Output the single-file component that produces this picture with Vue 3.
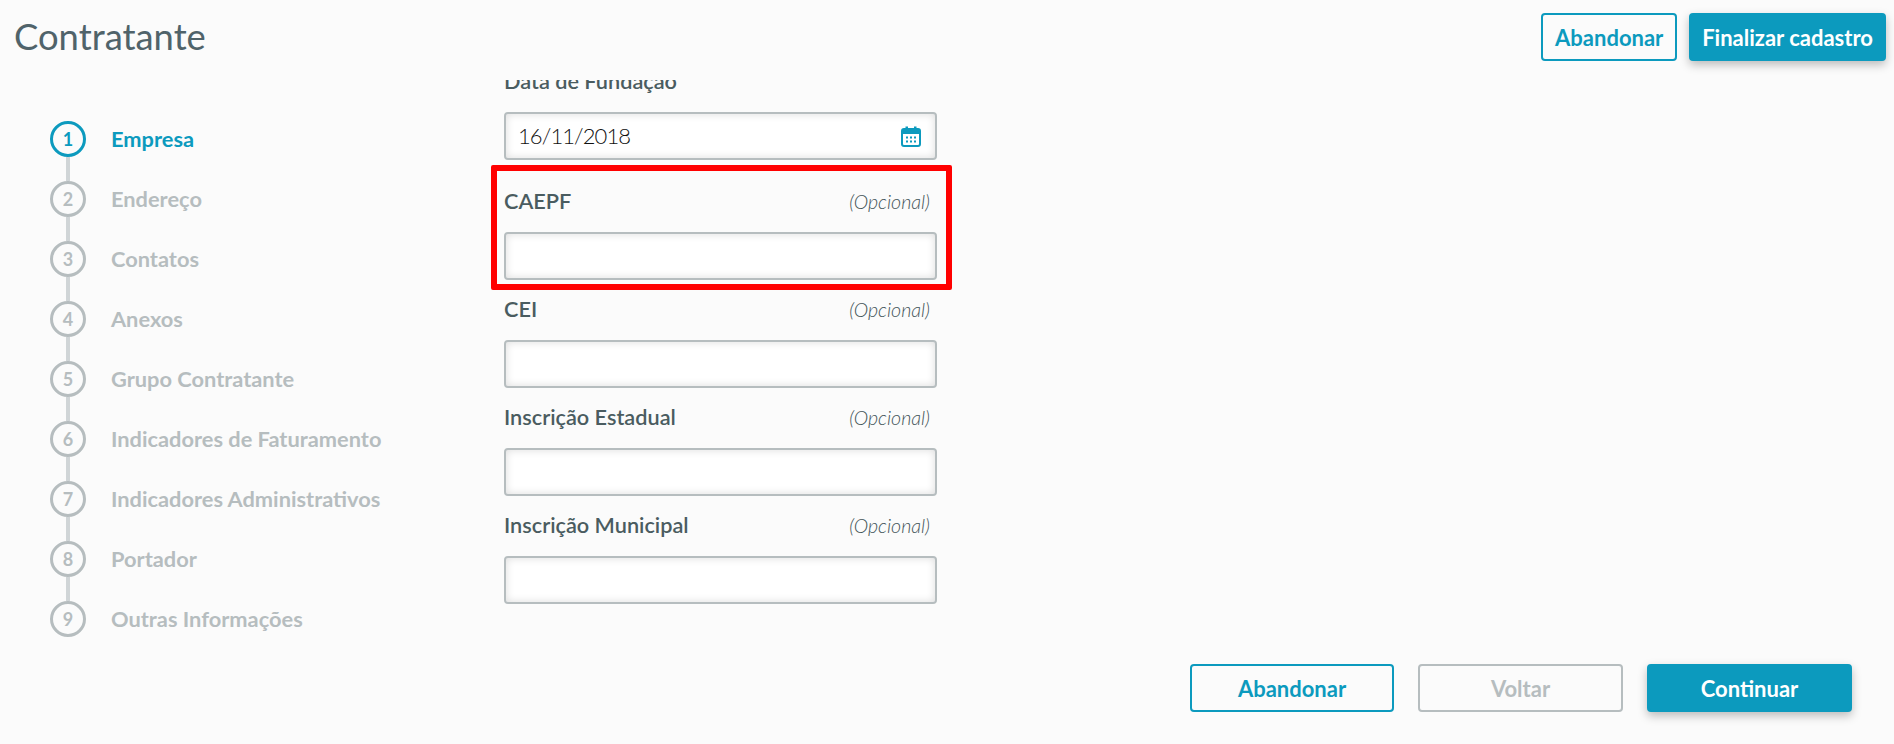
<script setup>
const passos = [
  'Empresa',
  'Endereço',
  'Contatos',
  'Anexos',
  'Grupo Contratante',
  'Indicadores de Faturamento',
  'Indicadores Administrativos',
  'Portador',
  'Outras Informações'
]

const campos = ['CAEPF', 'CEI', 'Inscrição Estadual', 'Inscrição Municipal']
</script>

<template>
  <div class="page">
    <header class="topo">
      <h1>Contratante</h1>
      <div class="acoes">
        <button class="btn btn-outline">Abandonar</button>
        <button class="btn btn-primary">Finalizar cadastro</button>
      </div>
    </header>

    <main class="corpo">
      <ol class="passos">
        <li v-for="(passo, i) in passos" :key="passo" class="passo" :class="{ ativo: i === 0 }">
          <span class="numero">{{ i + 1 }}</span>
          <span class="nome">{{ passo }}</span>
        </li>
      </ol>

      <div class="form-area">
        <div class="form-clip">
          <div class="form-scroll">
            <div class="campo campo-data">
              <div class="rotulo"><label>Data de Fundação</label></div>
              <div class="entrada entrada-data">
                <span>16/11/2018</span>
                <svg width="20" height="21" viewBox="0 0 20 21" fill="none">
                  <rect x="1" y="3" width="18" height="17" rx="2" stroke="#0c9abe" stroke-width="2" />
                  <rect x="1" y="3" width="18" height="5" fill="#0c9abe" />
                  <rect x="4.5" y="0.5" width="2.5" height="4" fill="#0c9abe" />
                  <rect x="13" y="0.5" width="2.5" height="4" fill="#0c9abe" />
                  <g fill="#0c9abe">
                    <rect x="5" y="10.5" width="2" height="2" />
                    <rect x="9" y="10.5" width="2" height="2" />
                    <rect x="13" y="10.5" width="2" height="2" />
                    <rect x="5" y="14.5" width="2" height="2" />
                    <rect x="9" y="14.5" width="2" height="2" />
                    <rect x="13" y="14.5" width="2" height="2" />
                  </g>
                </svg>
              </div>
            </div>

            <div v-for="campo in campos" :key="campo" class="campo">
              <div class="rotulo">
                <label>{{ campo }}</label>
                <em>(Opcional)</em>
              </div>
              <div class="entrada"></div>
            </div>
          </div>
        </div>

        <div class="destaque"></div>
      </div>
    </main>

    <footer class="rodape">
      <button class="btn btn-outline btn-largo">Abandonar</button>
      <button class="btn btn-disabled btn-largo">Voltar</button>
      <button class="btn btn-primary btn-largo">Continuar</button>
    </footer>
  </div>
</template>

<style>
html,
body {
  margin: 0;
  background: #fbfbfb;
}
</style>

<style scoped>
.page {
  width: 1894px;
  height: 744px;
  overflow: hidden;
  background: #fbfbfb;
  font-family: Lato, 'Noto Sans', sans-serif;
  color: #4a5c60;
}

.topo {
  height: 80px;
  box-sizing: border-box;
  padding: 13px 8px 0 14px;
  display: flex;
  justify-content: space-between;
  align-items: flex-start;
}

.topo h1 {
  margin: 0;
  font-size: 36.4px;
  font-weight: 400;
  line-height: 46px;
  color: #50636a;
}

.acoes {
  display: flex;
  gap: 12px;
}

.btn {
  height: 48px;
  padding: 0 11px;
  border-radius: 4px;
  font-family: inherit;
  font-size: 22px;
  font-weight: 700;
  box-sizing: border-box;
  cursor: pointer;
}

.btn-outline {
  background: transparent;
  border: 2px solid #0c9abe;
  color: #0c9abe;
}

.acoes .btn-outline {
  width: 136px;
  padding: 0;
}

.btn-primary {
  background: #0c9abe;
  border: 2px solid #0c9abe;
  color: #fff;
  box-shadow: 0 4px 10px rgba(0, 0, 0, 0.25);
}

.btn-disabled {
  background: transparent;
  border: 2px solid #b6bdbf;
  color: #b6bdbf;
}

.btn-largo {
  width: 205px;
}

.btn-largo:first-child {
  width: 204px;
}

.corpo {
  height: 584px;
  display: flex;
}

.passos {
  list-style: none;
  margin: 0;
  padding: 41px 0 0 50px;
  width: 454px;
  box-sizing: border-box;
}

.passo {
  position: relative;
  height: 60px;
  display: flex;
  align-items: flex-start;
  gap: 25px;
}

.passo:not(:last-child)::after {
  content: '';
  position: absolute;
  left: 16px;
  top: 36px;
  width: 4px;
  height: 24px;
  background: #d0d5d7;
}

.numero {
  width: 36px;
  height: 36px;
  box-sizing: border-box;
  border: 3px solid #b6bdbf;
  border-radius: 50%;
  display: flex;
  align-items: center;
  justify-content: center;
  font-size: 18px;
  font-weight: 700;
  color: #b6bdbf;
}

.nome {
  font-size: 21.8px;
  font-weight: 700;
  line-height: 36px;
  color: #b6bdbf;
}

.ativo .numero {
  border-color: #0c9abe;
  color: #0c9abe;
}

.ativo .nome {
  color: #0c9abe;
}

.form-area {
  position: relative;
  width: 433px;
  margin-left: 50px;
  height: 584px;
}

.form-clip {
  height: 584px;
  overflow: hidden;
}

.form-scroll {
  margin-top: -28px;
}

.campo {
  height: 108px;
}

.campo-data {
  height: 120px;
}

.rotulo {
  height: 60px;
  display: flex;
  align-items: center;
  justify-content: space-between;
  padding-right: 7px;
  padding-bottom: 2px;
  box-sizing: border-box;
}

.rotulo label {
  font-size: 21.7px;
  font-weight: 600;
}

.rotulo em {
  font-size: 19.6px;
  font-weight: 300;
  color: #445559;
}

.entrada {
  height: 48px;
  box-sizing: border-box;
  border: 2px solid #b6bdbf;
  border-radius: 4px;
  background: #fff;
  box-shadow: inset 0 0 8px rgba(0, 0, 0, 0.14);
}

.entrada-data {
  display: flex;
  align-items: center;
  justify-content: space-between;
  padding: 0 14px 2px 12px;
  font-size: 22px;
  font-weight: 300;
  letter-spacing: -0.9px;
  color: #111;
}

.entrada-data svg {
  margin-top: 2px;
}

.destaque {
  position: absolute;
  left: -13px;
  top: 85px;
  width: 461px;
  height: 125px;
  box-sizing: border-box;
  border: 6px solid #f00;
  border-radius: 2px;
}

.rodape {
  display: flex;
  justify-content: flex-end;
  gap: 24px;
  padding-right: 42px;
}
</style>
